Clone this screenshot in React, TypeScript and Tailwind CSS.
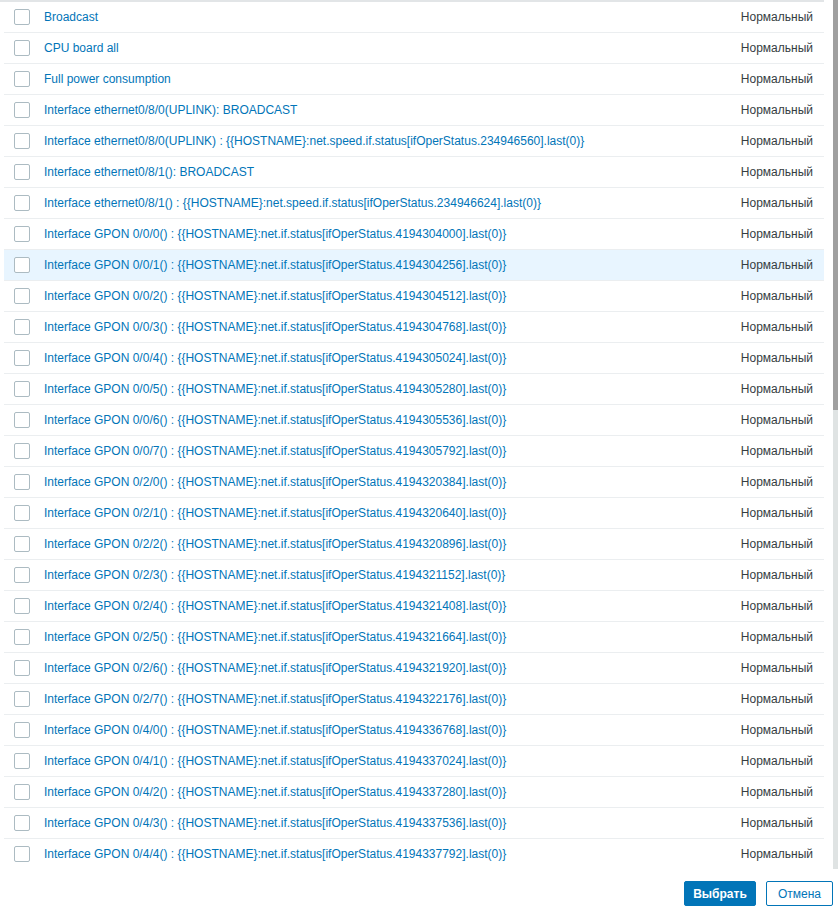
import React from 'react';

type Row = { name: string; highlighted?: boolean };

const fixedRows: string[] = [
    'Broadcast',
    'CPU board all',
    'Full power consumption',
    'Interface ethernet0/8/0(UPLINK): BROADCAST',
    'Interface ethernet0/8/0(UPLINK) : {{HOSTNAME}:net.speed.if.status[ifOperStatus.234946560].last(0)}',
    'Interface ethernet0/8/1(): BROADCAST',
    'Interface ethernet0/8/1() : {{HOSTNAME}:net.speed.if.status[ifOperStatus.234946624].last(0)}',
];

// GPON ports: index = 4194304000 + slot * 8192 + port * 256
const gponRows: string[] = [];
for (const slot of [0, 2, 4]) {
    for (let port = 0; port < 8; port++) {
        const idx = 4194304000 + slot * 8192 + port * 256;
        gponRows.push(`Interface GPON 0/${slot}/${port}() : {{HOSTNAME}:net.if.status[ifOperStatus.${idx}].last(0)}`);
    }
}

const rows: Row[] = [...fixedRows, ...gponRows.slice(0, 21)].map((name) => ({
    name,
    highlighted: name.startsWith('Interface GPON 0/0/1()'),
}));

const Checkbox: React.FC = () => (
    <span className="block w-4 h-4 rounded-[2px] border border-[#acbbc2] bg-white" />
);

export default function App() {
    return (
        <div className="w-[838px] h-[911px] bg-white flex flex-col text-[12px] font-['Liberation_Sans',Arial,sans-serif] text-[#1f2c33]">
            <div className="h-[869px] flex overflow-hidden">
                {/* list */}
                <div className="flex-1 overflow-hidden pr-[9px]">
                    <div className="h-[2px] bg-[#e2e5e7]" />
                    <div className="pl-1">
                        {rows.map((row, i) => (
                            <div
                                key={i}
                                className={`flex items-center h-[31px] border-b border-[#ebeef0] ${row.highlighted ? 'bg-[#e8f5ff]' : ''}`}
                            >
                                <div className="w-10 pl-[10px] shrink-0">
                                    <Checkbox />
                                </div>
                                <span className="flex-1 text-[#0275b8] whitespace-nowrap">{row.name}</span>
                                <span className="pr-[11px] pl-4 text-[#353d42]">Нормальный</span>
                            </div>
                        ))}
                    </div>
                </div>
                {/* scrollbar */}
                <div className="w-[5px] flex flex-col bg-[#dfe3e3]">
                    <div className="h-[410px] bg-[#a0a0a0]" />
                </div>
            </div>
            <div className="flex-1 flex items-start justify-end gap-[10px] pt-3 pr-[5px]">
                <button className="h-[25px] w-[72px] rounded-[2px] bg-[#0275b8] border border-[#0275b8] text-white font-bold">
                    Выбрать
                </button>
                <button className="h-[25px] w-[67px] rounded-[2px] bg-white border border-[#0275b8] text-[#0275b8]">
                    Отмена
                </button>
            </div>
        </div>
    );
}
